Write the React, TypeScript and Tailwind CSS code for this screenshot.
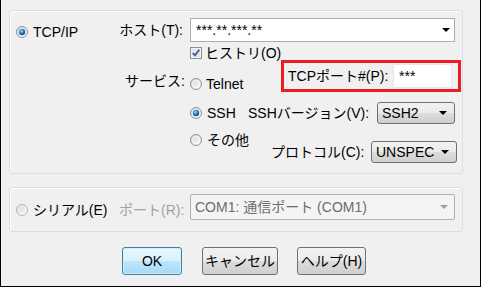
import React from 'react';

function Radio({ checked = false, disabled = false }: { checked?: boolean; disabled?: boolean }) {
  return (
    <svg width="12" height="12" viewBox="0 0 12 12" className="shrink-0">
      <defs>
        <linearGradient id="rbg" x1="0" y1="0" x2="1" y2="1">
          <stop offset="0" stopColor="#d4d4d4" />
          <stop offset="1" stopColor="#fbfbfb" />
        </linearGradient>
        <radialGradient id="rdot" cx="0.4" cy="0.35" r="0.7">
          <stop offset="0" stopColor="#a8e0ff" />
          <stop offset="0.45" stopColor="#2a8ad8" />
          <stop offset="1" stopColor="#0b3f7e" />
        </radialGradient>
      </defs>
      <circle cx="6" cy="6" r="5.5" fill="url(#rbg)" stroke={disabled ? '#b8b8b8' : '#8e8f8f'} />
      <circle cx="6" cy="6" r="3.8" fill="none" stroke="#ffffff" strokeOpacity="0.6" />
      {checked && <circle cx="6" cy="6" r="3.2" fill="url(#rdot)" />}
    </svg>
  );
}

function CheckBox() {
  return (
    <svg width="12" height="12" viewBox="0 0 12 12" className="shrink-0">
      <rect x="0.5" y="0.5" width="11" height="11" fill="#f4f4f4" stroke="#8e8f8f" />
      <rect x="2" y="2" width="8" height="8" fill="#e2e4e6" />
      <path d="M2.8 6 L5 8.4 L9.3 2.8" fill="none" stroke="#3f56a1" strokeWidth="1.8" />
    </svg>
  );
}

function Arrow({ color = '#000' }: { color?: string }) {
  return (
    <svg width="8" height="4" viewBox="0 0 8 4" className="shrink-0">
      <polygon points="0,0 8,0 4,4" fill={color} />
    </svg>
  );
}

function DropButton({ value, width }: { value: string; width: string }) {
  return (
    <div
      className={`${width} h-[22px] flex items-center justify-between pl-[4px] pr-[7px] rounded-[3px] border border-[#707070] bg-[linear-gradient(to_bottom,#f2f2f2_0%,#ebebeb_50%,#dddddd_50%,#cfcfcf_100%)]`}
    >
      <span>{value}</span>
      <Arrow />
    </div>
  );
}

export default function App() {
  return (
    <div className="w-[481px] h-[287px] bg-[#f0f0f0] border-x border-b border-black pt-[10px] px-[8px] text-[14px] leading-none text-black font-[family-name:'Liberation_Sans','Noto_Sans_CJK_JP',sans-serif]">
      {/* TCP/IP group */}
      <div className="w-[454px] h-[164px] flex rounded-[3px] border border-[#d5dfe5] shadow-[inset_1px_1px_0_#fff]">
        <div className="w-[180px] flex flex-col">
          <div className="mt-[7px] h-[24px] flex items-center justify-between pl-[6px] pr-[7px]">
            <div className="flex items-center gap-[5px] translate-y-[2px]">
              <Radio checked />
              <span>TCP/IP</span>
            </div>
            <span>ホスト(T):</span>
          </div>
          <div className="mt-[31px] h-[16px] flex items-center justify-end pr-[5px]">サービス:</div>
        </div>

        <div className="flex-1 flex flex-col">
          <div className="mt-[7px] w-[265px] h-[24px] flex items-center justify-between pl-[5px] pr-[4px] bg-white border border-[#abadb3]">
            <span>***.**.***.**</span>
            <Arrow />
          </div>
          <div className="mt-[4px] h-[14px] flex items-center gap-[3px]">
            <CheckBox />
            <span>ヒストリ(O)</span>
          </div>

          <div className="flex">
            <div className="w-[55px] flex flex-col">
              <div className="mt-[16px] h-[16px] flex items-center gap-[4px]">
                <Radio />
                <span>Telnet</span>
              </div>
              <div className="mt-[13px] h-[16px] flex items-center gap-[5px]">
                <Radio checked />
                <span>SSH</span>
              </div>
              <div className="mt-[11px] h-[16px] flex items-center gap-[5px]">
                <Radio />
                <span className="whitespace-nowrap">その他</span>
              </div>
            </div>

            <div className="flex flex-col">
              <div className="ml-[36px] w-[180px] h-[32px] flex items-center pl-[4px] border-[3px] border-[#ed1c24]">
                <span className="w-[105px] whitespace-nowrap">TCPポート#(P):</span>
                <div className="w-[59px] h-[24px] flex items-center pl-[5px] bg-white border border-[#e3e9ef]">***</div>
              </div>
              <div className="mt-[10px] ml-[3px] h-[22px] flex items-center">
                <span className="w-[129px] whitespace-nowrap">SSHバージョン(V):</span>
                <DropButton value="SSH2" width="w-[78px]" />
              </div>
              <div className="mt-[17px] ml-[26px] h-[22px] flex items-center">
                <span className="w-[100px] whitespace-nowrap">プロトコル(C):</span>
                <DropButton value="UNSPEC" width="w-[86px]" />
              </div>
            </div>
          </div>
        </div>
      </div>

      {/* Serial group */}
      <div className="mt-[13px] w-[454px] h-[45px] flex items-center pl-[6px] rounded-[3px] border border-[#d5dfe5] shadow-[inset_1px_1px_0_#fff]">
        <div className="w-[103px] flex items-center gap-[5px]">
          <Radio disabled />
          <span>シリアル(E)</span>
        </div>
        <span className="w-[71px] text-[#a0a0a0]">ポート(R):</span>
        <div className="mb-[6px] w-[265px] h-[26px] flex items-center justify-between pl-[4px] pr-[6px] bg-[#f4f4f4] border border-[#adb2b5] rounded-[2px] text-[#6d6d6d]">
          <span>COM1: 通信ポート (COM1)</span>
          <Arrow color="#a0a0a0" />
        </div>
      </div>

      {/* Buttons */}
      <div className="mt-[15px] pl-[113px] flex gap-[20px]">
        <button className="w-[60px] h-[28px] rounded-[3px] border border-[#3c7fb1] bg-[linear-gradient(to_bottom,#eaf6fd_0%,#d9f0fc_50%,#bee6fd_50%,#a7d9f5_100%)] shadow-[inset_0_0_0_1px_#d6ecf8]">
          OK
        </button>
        <button className="w-[76px] h-[28px] rounded-[3px] border border-[#707070] bg-[linear-gradient(to_bottom,#f2f2f2_0%,#ebebeb_50%,#dddddd_50%,#cfcfcf_100%)]">
          キャンセル
        </button>
        <button className="-ml-[1px] w-[69px] h-[28px] rounded-[3px] border border-[#707070] bg-[linear-gradient(to_bottom,#f2f2f2_0%,#ebebeb_50%,#dddddd_50%,#cfcfcf_100%)]">
          ヘルプ(H)
        </button>
      </div>
    </div>
  );
}
